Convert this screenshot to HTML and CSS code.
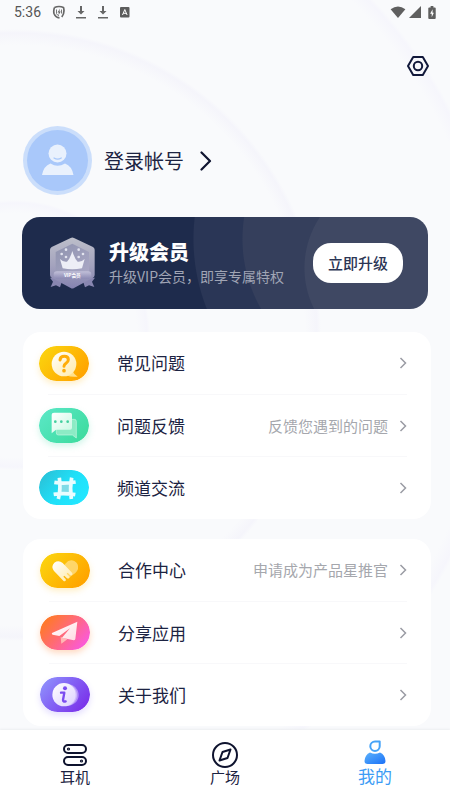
FILE: index.html
```html
<!DOCTYPE html>
<html lang="zh-CN">
<head>
<meta charset="utf-8">
<meta name="viewport" content="width=device-width, initial-scale=1">
<title>我的</title>
<link rel="stylesheet" href="styles.css">
</head>
<body>
<header class="status">
  <span class="clock">5:36</span>
  <svg class="s-icon" viewBox="0 0 14 14"><path d="M2.500 2.500Q7 .5 11.500 2.500 13 8 9.800 12M7.500 12.800Q3.500 12.500 2 8.500 1.300 5.500 2.500 2.500" fill="none" stroke="#666" stroke-width="1.700"/><path d="M4.500 4.500v4q1 2 2.500 2.500M9.500 4.500v4" fill="none" stroke="#777"/><path d="M8 3.500 5.500 7.500h1.400L6.300 10.500l2.500-4H7.400Z" fill="#666"/></svg>
  <svg class="s-icon" viewBox="0 0 14 14"><path d="M6 1h2v5h2.500L7 9.500 3.500 6H6ZM2 12h10v1.500H2Z" fill="#666"/></svg>
  <svg class="s-icon" viewBox="0 0 14 14"><path d="M6 1h2v5h2.500L7 9.500 3.500 6H6ZM2 12h10v1.500H2Z" fill="#666"/></svg>
  <svg class="s-icon" viewBox="0 0 14 14"><rect x="2" y="2" width="9.500" height="10.500" rx="1" fill="#5c5c5c"/><path d="m4.500 10 2.300-5.500L9.100 10M5.300 8.300h3" fill="none" stroke="#fff"/></svg>
  <span class="status-right">
    <svg class="wifi" viewBox="0 0 16 13"><path d="M0 3.500Q8-2.500 16 3.500L8 13Z" fill="#5f5f5f"/></svg>
    <svg class="signal" viewBox="0 0 12 12"><path d="M0 12 12 0V12Z" fill="#5f5f5f"/></svg>
    <svg class="battery" viewBox="0 0 8 14"><path d="M2.500 0h3v1.500H7q1 0 1 1V13q0 1-1 1H1q-1 0-1-1V2.500q0-1 1-1h1.500Z" fill="#5f5f5f"/><path d="M4.600 3.500 2 8.300h1.700V12L6 7.200H4.600Z" fill="#fff"/></svg>
  </span>
</header>

<main class="page">
  <div class="tools">
    <button class="settings" type="button" aria-label="设置">
      <svg viewBox="0 0 24 24" fill="none" stroke="#11183a" stroke-width="2" stroke-linejoin="round"><path d="M7.200 3h9.600L22 12l-5.200 9H7.200L2 12Z"/><circle cx="12" cy="12" r="4.200"/></svg>
    </button>
  </div>

  <button class="profile" type="button">
    <svg class="avatar" viewBox="0 0 69 69"><circle cx="34.500" cy="34.500" r="34.500" fill="#cbdefb"/><circle cx="34.500" cy="34.500" r="30.500" fill="#a9c8fa"/><path d="M19 49q1.500-9 8.500-11.600Q34.500 42 42 37.400 49 40 50.500 49Z" fill="#e9f1fd"/><circle cx="34.500" cy="27.500" r="9" fill="#e9f1fd"/><path d="M31 32q3.600 2.400 7.300 0" fill="none" stroke="#a9c8fa" stroke-width="1.200" stroke-linecap="round"/></svg>
    <span class="login">登录帐号</span>
    <svg class="login-arrow" viewBox="0 0 12 20"><path d="m1.500 1.500 8.500 8.500-8.500 8.500" fill="none" stroke="#0f1430" stroke-width="2.200" stroke-linecap="round" stroke-linejoin="round"/></svg>
  </button>

  <section class="vip">
    <svg class="badge" viewBox="0 0 135 156">
      <defs>
        <linearGradient id="hex" x1="0" y1="0" x2="0" y2="1"><stop offset="0" stop-color="#bdbfca"/><stop offset=".55" stop-color="#a4a3be"/><stop offset="1" stop-color="#8583b0"/></linearGradient>
        <linearGradient id="hexIn" x1="0" y1="0" x2="1" y2="1"><stop offset="0" stop-color="#8f93ae"/><stop offset="1" stop-color="#a9a7c5"/></linearGradient>
        <linearGradient id="band" x1="0" y1="0" x2="0" y2="1"><stop offset="0" stop-color="#c1bfd8"/><stop offset="1" stop-color="#8d8bb4"/></linearGradient>
      </defs>
      <path d="M14 122H0l9 12-7 16 16-5 12 6 8-24ZM121 122h14l-9 12 7 16-16-5-12 6-8-24Z" fill="#8886b0"/>
      <path d="M62 3q5-3 10 0l57 27q5 3 5 8v76q0 5-5 8l-57 31q-5 3-10 0L5 122q-5-3-5-8V38q0-5 5-8Z" fill="url(#hex)"/>
      <path d="M67 20 117 45v62H17V45Z" fill="url(#hexIn)"/>
      <path d="M30 66q10 10 21 8 9-8 16-32 7 24 16 32 11 2 21-8l-8 28q-29 6-58 0Z" fill="#edeef6"/>
      <g fill="#e3e4ef"><circle cx="35" cy="51" r="4"/><circle cx="48" cy="38" r="4"/><circle cx="48" cy="60" r="4"/><circle cx="86" cy="38" r="4"/><circle cx="86" cy="60" r="4"/><circle cx="99" cy="51" r="4"/></g>
      <rect x="11" y="103" width="113" height="22" rx="10" fill="url(#band)"/>
      <text class="badge-text" x="67" y="119" text-anchor="middle">VIP会员</text>
    </svg>
    <div class="vip-copy">
      <h2 class="vip-title">升级会员</h2>
      <p class="vip-sub">升级VIP会员，即享专属特权</p>
    </div>
    <button class="upgrade" type="button">立即升级</button>
  </section>

  <nav class="card first" aria-label="帮助">
    <a class="row" href="#faq">
      <svg class="pill amber" viewBox="0 0 150 105">
        <defs><linearGradient id="amber" x1="0" y1="0" x2="1" y2=".6"><stop offset="0" stop-color="#fbd80f"/><stop offset="1" stop-color="#ffa500"/></linearGradient><linearGradient id="cream" x1="0" y1="0" x2="1" y2="1"><stop offset="0" stop-color="#fff"/><stop offset="1" stop-color="#ffeaa8"/></linearGradient></defs>
        <rect width="150" height="105" rx="52" fill="url(#amber)"/><path d="M100 74q4 10 16 18-20 2-34-4Z" fill="#ffe08a"/><circle cx="75" cy="54" r="37" fill="url(#cream)"/>
        <path d="M63 42q1-11 13-11t12 10q0 6-7 11-6 4-6 9" fill="none" stroke="#ffad0a" stroke-width="9" stroke-linecap="round"/><circle cx="75" cy="74" r="5.500" fill="#ffad0a"/>
      </svg>
      <span class="label">常见问题</span>
      <svg class="arrow" viewBox="0 0 8 12"><path d="m1.500 1 5 5-5 5"/></svg>
    </a>
    <a class="row" href="#feedback">
      <svg class="pill green" viewBox="0 0 150 105">
        <defs><linearGradient id="green" x1="0" y1="0" x2="1" y2=".7"><stop offset="0" stop-color="#5ce8c8"/><stop offset="1" stop-color="#3edca0"/></linearGradient><linearGradient id="mint" x1="0" y1="0" x2="1" y2="1"><stop offset="0" stop-color="#fff"/><stop offset="1" stop-color="#c9f8e4"/></linearGradient></defs>
        <rect width="150" height="105" rx="52" fill="url(#green)"/><path d="M58 34h48q6 0 6 6v50l-12-9H58q-6 0-6-6V40q0-6 6-6Z" fill="#8cebc5" stroke="#c4f7e2" stroke-width="2"/><path d="M45 14h48q6 0 6 6v39q0 6-6 6H51l-13 11V20q0-6 7-6Z" fill="url(#mint)"/>
        <g fill="#43cf9f"><circle cx="49" cy="41" r="4"/><circle cx="67" cy="41" r="4"/><circle cx="86" cy="41" r="4"/></g>
      </svg>
      <span class="label">问题反馈</span><span class="hint">反馈您遇到的问题</span>
      <svg class="arrow" viewBox="0 0 8 12"><path d="m1.500 1 5 5-5 5"/></svg>
    </a>
    <a class="row" href="#channel">
      <svg class="pill" viewBox="0 0 150 105">
        <defs><linearGradient id="cyan" x1="0" y1="0" x2="1" y2=".6"><stop offset="0" stop-color="#2cbcd2"/><stop offset=".6" stop-color="#20e0f8"/><stop offset="1" stop-color="#22e6ff"/></linearGradient></defs>
        <rect width="150" height="105" rx="52" fill="url(#cyan)"/><path d="M62 40h33v31H62Z" fill="#7fdbe6"/><path d="M61 23q5 32-3 64M98 23q-6 32-1 64M46 37q30 5 64-1M44 73q30-5 65 1" fill="none" stroke="#e9fdff" stroke-width="11"/>
      </svg>
      <span class="label">频道交流</span>
      <svg class="arrow" viewBox="0 0 8 12"><path d="m1.500 1 5 5-5 5"/></svg>
    </a>
  </nav>

  <nav class="card" aria-label="更多">
    <a class="row" href="#partner">
      <svg class="pill amber" viewBox="0 0 150 105">
        <rect width="150" height="105" rx="52" fill="url(#amber)"/><path d="M76 32q12-15 27-8 14 8 11 24-2 6-8 12L85 76 62 50Z" fill="#ffe08a" opacity=".75"/>
        <path d="M42 54Q32 40 43 29q13-9 25 1l28 29q3 4 0 7-4 2-7-1l-6-6-3 3 8 8q2 4-1 6-4 2-7-1l-7-7-3 3 7 7q2 4-1 6-3 2-6-1Z" fill="url(#cream)"/>
      </svg>
      <span class="label">合作中心</span><span class="hint">申请成为产品星推官</span>
      <svg class="arrow" viewBox="0 0 8 12"><path d="m1.500 1 5 5-5 5"/></svg>
    </a>
    <a class="row" href="#share">
      <svg class="pill coral" viewBox="0 0 150 105">
        <defs><linearGradient id="coral" x1="0" y1="0" x2="1" y2=".6"><stop offset="0" stop-color="#ff7e0c"/><stop offset=".55" stop-color="#ff6b74"/><stop offset="1" stop-color="#fb5bd3"/></linearGradient><linearGradient id="paper" x1="0" y1="0" x2="1" y2="1"><stop offset="0" stop-color="#fff"/><stop offset="1" stop-color="#ffdce2"/></linearGradient></defs>
        <rect width="150" height="105" rx="52" fill="url(#coral)"/><path d="M62 66 64 86 82 73Z" fill="#ffb7b5"/><path d="M112 20 36 54q-2 3 2 5l20 4 32-23-24 28 35 8q4 0 5-4Z" fill="url(#paper)"/>
      </svg>
      <span class="label">分享应用</span>
      <svg class="arrow" viewBox="0 0 8 12"><path d="m1.500 1 5 5-5 5"/></svg>
    </a>
    <a class="row" href="#about">
      <svg class="pill violet" viewBox="0 0 150 105">
        <defs><linearGradient id="violet" x1="0" y1="0" x2="1" y2=".6"><stop offset="0" stop-color="#9199fd"/><stop offset=".5" stop-color="#8465f5"/><stop offset="1" stop-color="#7b36eb"/></linearGradient><linearGradient id="lilac" x1="0" y1="0" x2="1" y2="1"><stop offset="0" stop-color="#fff"/><stop offset="1" stop-color="#ddd2ff"/></linearGradient></defs>
        <rect width="150" height="105" rx="52" fill="url(#violet)"/><circle cx="84" cy="54" r="32" fill="#c2a9fb" opacity=".7"/><circle cx="78" cy="54" r="33" fill="#d4c4fd" opacity=".8"/><circle cx="72" cy="53" r="35" fill="url(#lilac)"/>
        <circle cx="75" cy="34" r="6" fill="#7b4cf0"/><path d="M63 47h10l-4 22q0 6 8 4" fill="none" stroke="#7b4cf0" stroke-width="7" stroke-linecap="round" stroke-linejoin="round"/>
      </svg>
      <span class="label">关于我们</span>
      <svg class="arrow" viewBox="0 0 8 12"><path d="m1.500 1 5 5-5 5"/></svg>
    </a>
  </nav>
</main>

<nav class="tabs" aria-label="主导航">
  <a class="tab" href="#earphone">
    <svg viewBox="0 0 26 26" fill="none" stroke="#0e132e" stroke-width="2"><rect x="2" y="3" width="22" height="8" rx="4"/><rect x="2" y="15" width="22" height="8" rx="4"/><circle cx="6.500" cy="7" r=".6"/><circle cx="19.500" cy="19" r=".6"/></svg>
    <span>耳机</span>
  </a>
  <a class="tab" href="#square">
    <svg viewBox="0 0 26 26" fill="none" stroke="#0e132e" stroke-width="2" stroke-linejoin="round"><circle cx="13" cy="13" r="12"/><path d="m18.500 7.500-8 2.500-3 8.500 8-2.500Z"/></svg>
    <span>广场</span>
  </a>
  <a class="tab active" href="#mine" aria-current="page">
    <svg viewBox="0 0 24 24"><defs><linearGradient id="me" x1="0" y1="0" x2="1" y2="1"><stop offset="0" stop-color="#5cb2fb"/><stop offset="1" stop-color="#1a71f8"/></linearGradient></defs><path d="M12 1.500H16.700V6.200A4.700 4.700 0 1 1 12 1.500Z" fill="none" stroke="#45a3f8" stroke-width="2" stroke-linejoin="round"/><path d="M7 12.500Q12 15 17 12.500 22 14.500 22.500 21q0 3-3 3h-15q-3 0-3-3Q2 14.500 7 12.500Z" fill="url(#me)"/></svg>
    <span>我的</span>
  </a>
</nav>
</body>
</html>
```
FILE: styles.css
```css
* {
  box-sizing: border-box;
}

body {
  margin: 0;
  min-height: 100vh;
  display: flex;
  flex-direction: column;
  font-family: "Noto Sans CJK SC", sans-serif;
  color: #1c2342;
  background:
    radial-gradient(circle at 15px 335px,
      transparent 122px, #f6f6fc 132px, transparent 135px,
      transparent 290px, #f5f5fb 302px, transparent 306px,
      transparent 474px, #f6f6fc 487px, transparent 491px),
    #f9fafc;
}

button {
  padding: 0;
  border: 0;
  background: none;
  font: inherit;
  color: inherit;
  cursor: pointer;
}

a {
  color: inherit;
  text-decoration: none;
}

svg {
  display: block;
  flex: none;
}

.status {
  display: flex;
  align-items: center;
  gap: 8px;
  height: 24px;
  padding: 0 14px;
}

.clock {
  margin-right: 3px;
  font: 400 14px/24px Roboto, sans-serif;
  color: #555;
}

.s-icon {
  width: 14px;
  height: 14px;
}

.status-right {
  display: flex;
  align-items: center;
  gap: 3px;
  margin-left: auto;
}

.wifi {
  width: 16px;
  height: 12px;
}

.signal {
  width: 12px;
  height: 12px;
}

.battery {
  width: 8px;
  height: 13px;
  margin-left: 4px;
}

.page {
  display: flex;
  flex-direction: column;
  padding: 30px 20px 4px 22px;
}

.tools {
  display: flex;
  justify-content: flex-end;
}

.settings svg {
  width: 24px;
  height: 24px;
}

.profile {
  display: flex;
  align-items: center;
  align-self: flex-start;
  margin: 48px 0 22px 1px;
}

.avatar {
  width: 69px;
  height: 69px;
}

.login {
  margin: 0 16px 0 12px;
  font-size: 20px;
  line-height: 30px;
}

.login-arrow {
  width: 12px;
  height: 20px;
}

.vip {
  display: flex;
  align-items: center;
  height: 92px;
  margin-right: 2px;
  padding: 0 25px 0 28px;
  border-radius: 18px;
  background:
    radial-gradient(circle at calc(100% - 32px) 51px, #3f4863 91px, transparent 92px),
    radial-gradient(circle at calc(100% - 45px) 22px, #353f5c 140px, transparent 141px),
    radial-gradient(circle at calc(100% - 45px) 22px, #2a3656 189px, transparent 190px),
    #1e2b4c;
}

.badge {
  width: 45px;
  height: 52px;
}

.badge-text {
  font-size: 14px;
  font-weight: 700;
  fill: #fff;
}

.vip-copy {
  flex: 1;
  margin-left: 14px;
}

.vip-title {
  margin: 0;
  font-size: 20px;
  font-weight: 900;
  line-height: 26px;
  color: #fff;
}

.vip-sub {
  margin: 0;
  font-size: 14px;
  line-height: 22px;
  color: #a0a5b5;
  white-space: nowrap;
}

.upgrade {
  flex: none;
  padding: 0 15px;
  border-radius: 18px;
  background: #fff;
  color: #2b3554;
  font-size: 15px;
  font-weight: 500;
  line-height: 40px;
}

.card {
  margin: 20px -1px 0 1px;
  padding: 0 24px 1px 17px;
  border-radius: 18px;
  background: #fff;
}

.card.first {
  margin-top: 23px;
  padding-left: 16px;
}

.row {
  display: flex;
  align-items: center;
  height: 62px;
}

.row + .row {
  border-top: 1px solid transparent;
  border-image: linear-gradient(to right, transparent 10px, #f8f8fa 10px) 1;
}

.pill {
  width: 50px;
  height: 35px;
  border-radius: 18px;
}

.amber {
  box-shadow: 0 3px 6px rgba(255, 190, 30, 0.25);
}

.green {
  box-shadow: 0 3px 6px rgba(70, 220, 170, 0.25);
}

.coral {
  box-shadow: 0 3px 6px rgba(255, 130, 50, 0.3);
}

.violet {
  box-shadow: 0 3px 6px rgba(120, 90, 255, 0.2);
}

.label {
  margin: 0 auto 0 28px;
  font-size: 17px;
  line-height: 26px;
}

.hint {
  margin-right: 11px;
  font-size: 15px;
  line-height: 24px;
  color: #a5a7ad;
}

.arrow {
  width: 8px;
  height: 12px;
  fill: none;
  stroke: #9a9ca4;
  stroke-width: 1.5px;
}

.tabs {
  position: sticky;
  bottom: 0;
  display: flex;
  height: 70px;
  margin-top: auto;
  background: #fff;
  box-shadow: 0 -1px 2px #eceef1;
}

.tab {
  flex: 1;
  display: flex;
  flex-direction: column;
  align-items: center;
  padding-top: 12px;
  font-size: 15px;
  line-height: 18px;
}

.tab svg {
  width: 26px;
  height: 26px;
}

.tab.active {
  padding-top: 10px;
  font-size: 17px;
  line-height: 24px;
  color: #3d9cf5;
}

.tab.active svg {
  width: 24px;
  height: 24px;
}
```
